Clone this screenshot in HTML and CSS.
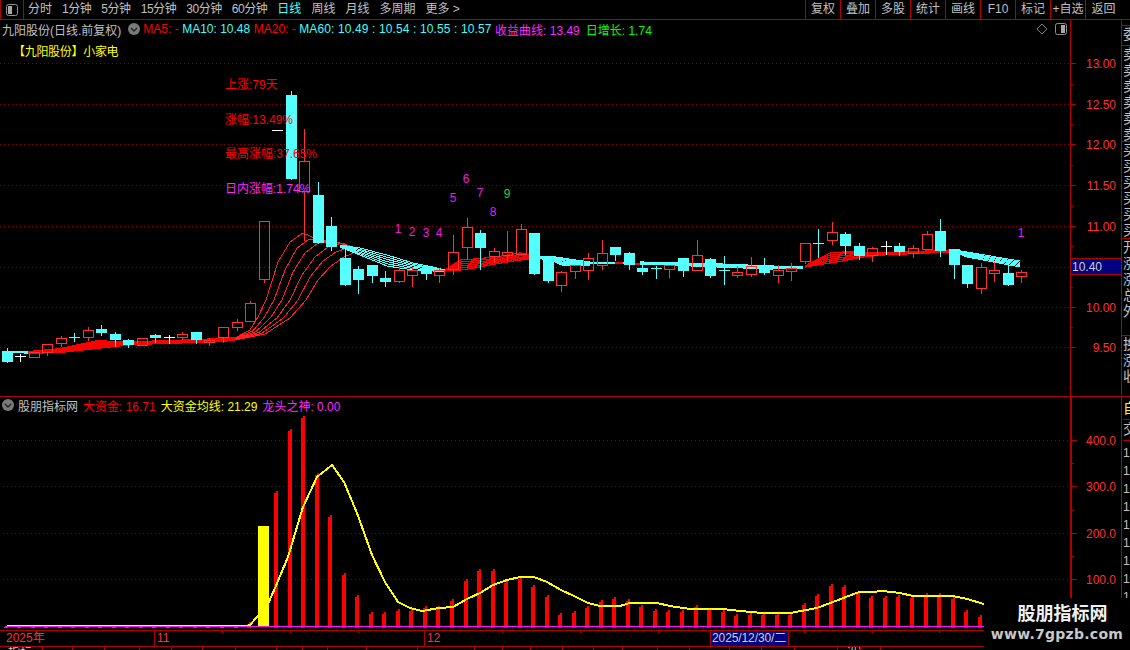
FILE: index.html
```html
<!DOCTYPE html>
<html lang="zh-CN">
<head>
<meta charset="utf-8">
<title>九阳股份 日线</title>
<link rel="stylesheet" href="styles.css">
</head>
<body>
<div class="app">
  <header class="toolbar">
    <div class="tb-icon">
      <svg class="panel-icon" viewBox="0 0 12 12"><rect x="0.5" y="0.5" width="11" height="11" rx="2" class="pi-frame"/><rect x="2" y="2" width="4" height="8" class="pi-fill"/></svg>
    </div>
    <nav class="tb-periods">
      <span>分时</span><span class="num">1分钟</span><span class="num">5分钟</span><span class="num">15分钟</span><span class="num">30分钟</span><span class="num">60分钟</span>
      <span class="active">日线</span><span>周线</span><span>月线</span><span>多周期</span><span>更多 &gt;</span>
    </nav>
    <nav class="tb-tools">
      <span>复权</span><span>叠加</span><span>多股</span><span>统计</span><span>画线</span><span>F10</span><span>标记</span><span>+自选</span><span class="last">返回</span>
    </nav>
  </header>

  <main class="workspace">
    <section class="pane pane-price" id="pricePane">
      <div class="legend">
        <span class="name">九阳股份(日线.前复权)</span>
        <svg class="circle-icon" viewBox="0 0 12 12"><circle cx="6" cy="6" r="6" class="ci-disc"/><path d="M3 5l3 3 3-3" class="ci-mark"/></svg>
        <span class="red">MA5: -</span>
        <span class="cyan">MA10: 10.48</span>
        <span class="red">MA20: -</span>
        <span class="cyan ma60">MA60: 10.49 : 10.54 : 10.55 : 10.57</span>
        <span class="magenta">收益曲线: 13.49</span>
        <span class="green daily">日增长: 1.74</span>
        <span class="legend-tools">
          <svg class="diamond" viewBox="0 0 12 12"><path d="M6 1l5 5-5 5-5-5z"/></svg>
          <svg class="panel-icon" viewBox="0 0 12 12"><rect x="0.5" y="0.5" width="11" height="11" rx="2" class="pi-frame"/><rect x="6" y="2" width="4" height="8" class="pi-fill"/></svg>
        </span>
      </div>
      <div class="sector">【九阳股份】小家电</div>
    </section>
    <div class="axis axis-price" id="priceAxis"></div>
    <aside class="side">
      <div class="side-cell h6"></div>
      <div class="side-cell h20"><span class="side-text">委</span></div>
      <div class="side-cell h96"><span class="side-text">卖卖卖卖卖卖</span></div>
      <div class="side-cell h97"><span class="side-text">买买买买买买</span></div>
      <div class="side-cell h97"><span class="side-text">开涨涨总外</span></div>
      <div class="side-cell h60"><span class="side-text">换涨收</span></div>
    </aside>

    <section class="pane pane-ind" id="indPane">
      <div class="legend legend-ind">
        <svg class="circle-icon" viewBox="0 0 12 12"><circle cx="6" cy="6" r="6" class="ci-disc"/><path d="M3 5l3 3 3-3" class="ci-mark"/></svg>
        <span class="name">股朋指标网</span>
        <span class="red">大资金: 16.71</span>
        <span class="yellow">大资金均线: 21.29</span>
        <span class="magenta">龙头之神: 0.00</span>
      </div>
    </section>
    <div class="axis axis-ind" id="indAxis"></div>
    <aside class="side side-ind">
      <div class="side-own">自</div>
      <div class="side-trade">交</div>
      <div class="side-nums">
        <span>10.40</span><span>10.41</span><span>10.42</span><span>10.43</span><span>10.44</span><span>10.45</span><span>10.46</span><span>10.47</span><span>10.48</span>
      </div>
    </aside>

    <div class="timeaxis" id="timeAxis">
      <span class="t t-year">2025年</span>
      <span class="t t-nov">11</span>
      <span class="t t-dec">12</span>
      <span class="t-date">2025/12/30/二</span>
    </div>
  </main>

  <footer class="tabs" id="tabs"></footer>

  <div class="watermark">
    <div class="wm-title">股朋指标网</div>
    <div class="wm-url">www.7gpzb.com</div>
  </div>
</div>
<script src="chart.js"></script>
</body>
</html>
```

FILE: styles.css
```css
* { box-sizing: border-box; }
html, body { margin: 0; padding: 0; background: #000; }
body {
  font-family: "Liberation Sans", "Noto Sans CJK SC", sans-serif;
  font-size: 12px;
  color: #c0c0c0;
}
.app {
  position: relative;
  width: 1130px;
  height: 650px;
  display: flex;
  flex-direction: column;
  overflow: hidden;
  background: #000;
}

/* top toolbar */
.toolbar {
  flex: 0 0 20px;
  display: flex;
  border-bottom: 1px solid #b00000;
  line-height: 19px;
}
.tb-icon {
  width: 24px;
  display: flex;
  align-items: center;
  justify-content: center;
  border-left: 1px solid #b00000;
  border-right: 1px solid #b00000;
}
.panel-icon { width: 12px; height: 12px; display: block; }
.pi-frame { fill: none; stroke: #909090; }
.pi-fill { fill: #a8a8a8; }
.tb-periods { display: flex; gap: 10px; padding-left: 4px; }
.tb-periods .num { letter-spacing: -0.45px; }
.tb-periods .active { color: #4fffff; }
.tb-tools { display: flex; margin-left: auto; padding-right: 9px; }
.tb-tools span {
  width: 35px;
  text-align: center;
  border-left: 1px solid #b00000;
}
.tb-tools .last { width: 36px; }

/* workspace grid */
.workspace {
  flex: 0 0 627px;
  display: grid;
  grid-template-columns: 1070px 51px 9px;
  grid-template-rows: 377px 233px 17px;
}
.pane { position: relative; }
.pane-price { border-bottom: 1px solid #b00000; }
.plot { position: absolute; left: 0; top: 0; display: block; }
.legend {
  position: relative;
  height: 20px;
  display: flex;
  align-items: center;
  gap: 3.5px;
  padding: 0 3px 2px 2px;
  white-space: nowrap;
}
.legend-ind { height: 18px; gap: 5px; padding-bottom: 2px; }
.legend-ind .circle-icon { margin: 0 -1px 0 0; }
.ma60 { letter-spacing: 0.12px; }
.daily { margin-left: 2.5px; }
.name { color: #c0c0c0; }
.red { color: #ff0000; }
.cyan { color: #3fffff; }
.magenta { color: #ff28ff; }
.green { color: #00ff00; }
.yellow { color: #ffff00; }
.circle-icon { width: 12px; height: 12px; flex: none; margin: 0 0 0 3px; }
.ci-disc { fill: #7a7a7a; }
.ci-mark { fill: none; stroke: #222; stroke-width: 1.4; }
.legend-tools {
  margin-left: auto;
  display: flex;
  align-items: center;
  gap: 7px;
}
.diamond { width: 12px; height: 12px; }
.diamond path { fill: none; stroke: #808080; }
.sector {
  position: relative;
  padding: 4px 0 0 13px;
  color: #ffff00;
  line-height: 16px;
  letter-spacing: -0.3px;
}

/* axes */
.axis { position: relative; }
.axis-price { border-bottom: 1px solid #b00000; }
.axis-text { font-size: 12px; fill: #ff3232; }
.price-flag { font-size: 12px; fill: #d0d0d0; }

/* right strip */
.side {
  border-left: 1px solid #b00000;
  overflow: hidden;
}
.side-cell { border-bottom: 1px solid #b00000; overflow: hidden; padding-left: 1px; }
.h6 { height: 6px; }
.h20 { height: 20px; }
.h96 { height: 96px; }
.h97 { height: 97px; }
.h60 { height: 61px; }
.side-text {
  display: block;
  width: 14px;
  font-size: 14px;
  line-height: 16px;
  color: #c0c0c0;
  word-break: break-all;
}
.side-ind { padding: 3px 0 0 1px; }
.side-own {
  font-size: 14px;
  line-height: 17px;
  width: 20px;
  color: #ffff00;
  border-bottom: 1px solid #b00000;
  padding-bottom: 2px;
}
.side-trade {
  font-size: 14px;
  line-height: 17px;
  width: 20px;
  margin-top: 1px;
  color: #c0c0c0;
  border-bottom: 1px solid #b00000;
  padding-bottom: 2px;
}
.side-nums { display: flex; flex-direction: column; padding-top: 3px; width: 40px; line-height: 18px; }

/* time axis */
.timeaxis {
  grid-column: 1 / -1;
  position: relative;
  display: flex;
  align-items: center;
  border-top: 1px solid #b00000;
  border-bottom: 1px solid #b00000;
  color: #ff3232;
}
.t { height: 100%; padding-left: 2px; line-height: 15px; }
.t-year { width: 154px; padding-left: 6px; }
.t-nov { width: 270px; border-left: 1px solid #b00000; }
.t-dec { width: 286px; border-left: 1px solid #b00000; }
.t-date {
  width: 79px;
  height: 100%;
  background: #000080;
  color: #d0d0d0;
  border-left: 1px solid #b00000;
  border-right: 1px solid #b00000;
  line-height: 15px;
  white-space: nowrap;
  letter-spacing: -0.1px;
  padding-left: 1px;
}
.time-ticks { position: absolute; left: 0; top: 0; display: block; }

/* bottom tabs */
.tabs { flex: 1; display: flex; overflow: hidden; }
.tab {
  flex: none;
  height: 12px;
  padding-left: 8px;
  border-right: 1px solid #b00000;
  line-height: 13px;
  white-space: nowrap;
  color: #d0d0d0;
  overflow: hidden;
}
.tab-cyan { color: #4fffff; }

/* watermark stamped over the corner */
.watermark {
  position: absolute;
  left: 984px;
  top: 598px;
  right: 0;
  bottom: 0;
  background: #000;
  text-align: center;
  padding: 1px 0 0 8px;
}
.wm-title {
  font-size: 18px;
  font-weight: 700;
  line-height: 30px;
  color: #f0f0f0;
  padding-left: 3px;
}
.wm-url {
  font-family: "DejaVu Sans", sans-serif;
  font-size: 14px;
  font-weight: 700;
  line-height: 12px;
  letter-spacing: 0.25px;
  color: #c8c8c8;
  white-space: nowrap;
  margin-left: -8px;
  margin-top: -1px;
}
```

FILE: chart.js
```js
(function () {
  var NS = 'http://www.w3.org/2000/svg';
  var RED = '#ff3232', CY = '#54ffff', GRID = '#8a0000', AX = '#b00000';

  function svg(parent, cls, x, y, w, h, body) {
    var s = document.createElementNS(NS, 'svg');
    s.setAttribute('class', cls);
    s.setAttribute('width', w);
    s.setAttribute('height', h);
    s.setAttribute('viewBox', x + ' ' + y + ' ' + w + ' ' + h);
    s.innerHTML = body;
    parent.insertBefore(s, parent.firstChild);
  }
  function rect(x, y, w, h, c) {
    return '<rect x="' + x + '" y="' + y + '" width="' + w + '" height="' + h + '" fill="' + c + '" shape-rendering="crispEdges"/>';
  }
  function line(x1, y1, x2, y2, c) {
    return '<line x1="' + x1 + '" y1="' + y1 + '" x2="' + x2 + '" y2="' + y2 + '" stroke="' + c + '" shape-rendering="crispEdges"/>';
  }
  function poly(pts, c, w) {
    return '<polyline fill="none" stroke="' + c + '" stroke-width="' + w + '" shape-rendering="crispEdges" points="' +
      pts.map(function (p) { return p[0] + ',' + p[1]; }).join(' ') + '"/>';
  }
  function grid(y, x0) {
    return '<line x1="' + x0 + '" y1="' + (y + 0.5) + '" x2="1070" y2="' + (y + 0.5) + '" stroke="' + GRID + '" stroke-dasharray="1 3" shape-rendering="crispEdges"/>';
  }
  function cx(i) { return Math.round(6.5 + 13.53 * i); }

  /* kind, bodyTop, bodyBottom, wickTop, wickBottom */
  var K = [
    ['c',351,362,348,362],['w',356,356,354,361],['r',352,357,352,357],['r',344,352,344,355],
    ['r',338,343,336,346],['x',337,337,333,341],['r',330,337,327,340],['c',329,333,325,335],
    ['c',334,340,332,346],['c',340,345,339,347],['r',338,345,338,345],['c',335,338,334,342],
    ['w',337,337,335,343],['r',334,337,332,339],['c',332,340,332,343],['r',340,342,338,345],
    ['r',327,337,327,342],['r',322,327,319,330],['r',303,321,301,321],['r',221,279,221,282],
    ['d',130,130,130,130],['c',95,179,91,179],['r',161,191,129,240],['c',195,243,182,243],
    ['c',226,247,217,250],['c',258,285,248,285],['c',269,280,266,293],['c',265,276,265,282],
    ['c',278,282,271,286],['r',270,281,265,282],['r',270,275,267,286],['c',270,274,265,279],
    ['r',270,275,268,282],['r',252,269,235,274],['r',227,247,218,259],['c',233,248,230,269],
    ['r',251,256,248,262],['r',252,255,231,260],['r',229,254,224,254],['c',233,274,233,274],
    ['c',256,281,256,282],['r',272,285,271,291],['r',265,271,265,278],['r',258,270,253,279],
    ['r',253,265,240,269],['c',247,255,247,260],['c',253,265,252,269],['c',268,272,265,274],
    ['x',268,268,266,278],['r',265,269,265,277],['c',258,271,258,276],['r',255,270,240,270],
    ['c',259,276,258,277],['x',270,270,256,284],['r',272,275,266,277],['r',266,274,257,276],
    ['c',266,273,258,274],['r',270,275,265,282],['r',268,271,263,280],['r',243,261,243,263],
    ['x',243,243,229,257],['r',232,240,222,244],['c',234,246,232,254],['c',246,256,243,259],
    ['r',248,255,247,261],['w',246,246,241,254],['c',246,252,243,255],['r',248,253,245,257],
    ['r',234,249,231,249],['c',231,251,219,256],['c',249,265,249,278],['c',265,284,265,287],
    ['r',267,288,263,293],['r',270,273,262,281],['c',273,285,265,285],['r',272,276,270,282]
  ];

  /* moving-average fans: [x, upper y, lower y] */
  function fan(pts, c, w) {
    var out = '';
    for (var k = 0; k < 6; k++) {
      var t = k / 5;
      out += poly(pts.map(function (p) {
        return [p[0], +(p[1] + (p[2] - p[1]) * t).toFixed(1)];
      }), c, w);
    }
    return out;
  }
  function ma() {
    var o = '';
    o += fan([[13,352,352],[28,352,353]], CY, 1.5);
    o += fan([[28,352,353],[60,349,352],[98,341,348],[115,342,346],[135,342,344],[170,341,343],[220,339,341],[235,338,340]], '#ff0000', 2);
    var tops = [
      [[278,262],[290,242],[303,233],[317,239],[331,245]],
      [[285,270],[297,248],[308,240],[320,239],[335,244]],
      [[293,272],[305,253],[318,243],[332,240],[345,245]],
      [[302,275],[315,257],[328,247],[342,243],[350,246]],
      [[310,277],[323,261],[336,252],[350,247]],
      [[318,280],[331,266],[344,257],[358,251]]
    ];
    tops.forEach(function (tp, k) {
      var low = [[235, 338 + 0.4 * k], [250 + 3 * k, 330 + 0.8 * k], [258 + 6.4 * k, 317 + 0.2 * k], [266 + 8 * k, 300]];
      o += poly(low.concat(tp), '#ff2020', 1);
    });
    o += fan([[340,245,247],[360,248,255],[387,255,266],[413,263,270],[433,267,271],[445,270,271]], CY, 1);
    o += fan([[445,270,271],[460,260,270],[475,259,268],[495,257,264],[520,253,260],[538,256,258]], '#ff0000', 1.2);
    o += fan([[538,256,258],[555,257,262],[562,258,265],[575,260,265],[590,262,265]], CY, 1.2);
    o += fan([[590,262,263],[615,262,263]], CY, 1);
    o += fan([[615,262,263],[623,262,263]], '#ff0000', 1);
    o += fan([[623,262,263],[635,262,263]], CY, 1);
    o += fan([[635,263,264],[640,263,264]], '#ff0000', 1);
    o += fan([[640,262,264],[720,264,267],[770,266,269],[803,267,268]], CY, 1.2);
    o += fan([[805,266,267],[830,253,263],[843,252,261],[863,252,257],[883,253,255],[950,250,252]], '#ff0000', 1.2);
    o += fan([[955,250,252],[967,252,257],[1020,261,267]], CY, 1);
    return o;
  }

  function candles() {
    var o = '';
    K.forEach(function (k, i) {
      var X = cx(i), t = k[0];
      if (t === 'd') { o += rect(X - 5, k[1], 11, 1, '#fff'); return; }
      var col = t === 'c' || t === 'x' ? CY : t === 'w' ? '#fff' : RED;
      if (t === 'x' || t === 'w') {
        o += rect(X, k[3], 1, k[4] - k[3] + 1, col);
        o += rect(X - 5, k[1], 11, 1, col);
      } else if (t === 'c') {
        o += rect(X, k[3], 1, k[4] - k[3] + 1, col);
        o += rect(X - 5, k[1], 11, k[2] - k[1], col);
      } else {
        var h = k[2] - k[1];
        o += rect(X, k[3], 1, k[1] - k[3], col);
        o += rect(X, k[2], 1, k[4] - k[2] + 1, col);
        o += rect(X - 5, k[1], 11, 1, col) + rect(X - 5, k[2], 11, 1, col);
        o += rect(X - 5, k[1], 1, h + 1, col) + rect(X + 5, k[1], 1, h + 1, col);
      }
    });
    return o;
  }

  function label(x, y, s, c, anchor) {
    return '<text x="' + x + '" y="' + y + '" fill="' + c + '" font-size="12"' + (anchor ? ' text-anchor="' + anchor + '"' : '') + '>' + s + '</text>';
  }

  /* price pane */
  var p = '';
  [63, 104, 144, 185, 226, 267, 307, 347].forEach(function (y) { p += grid(y, 0); });
  p += ma();
  p += candles();
  p += label(225, 89, '上涨:79天', '#ff0000');
  p += label(225, 124, '涨幅:13.49%', '#ff0000');
  p += label(225, 158, '最高涨幅:37.65%', '#ff0000');
  p += label(225, 193, '日内涨幅:1.74%', '#ff28ff');
  [[398,233,'1'],[412,236,'2'],[426,237,'3'],[439,237,'4'],[453,202,'5'],[466,183,'6'],[480,197,'7'],[493,216,'8'],[1021,237,'1']].forEach(function (n) {
    p += label(n[0], n[1], n[2], '#e81ee8', 'middle');
  });
  p += label(507, 198, '9', '#30d030', 'middle');
  svg(document.getElementById('pricePane'), 'plot', 0, 20, 1070, 376, p);

  /* indicator pane */
  var tops = {18:622,20:491,21:429,22:416,23:473,24:515,25:573,26:595,27:612,28:612,29:609,30:609,31:606,32:606,33:599,34:579,35:569,36:569,37:581,38:577,39:585,40:595,41:613,42:611,43:606,44:600,45:597,46:599,47:605,48:609,49:610,50:610,51:605,52:608,53:610,54:614,55:613,56:613,57:613,58:613,59:603,60:594,61:584,62:585,63:592,64:596,65:596,66:595,67:596,68:593,69:593,70:597,71:610,72:615,73:615,74:615,75:615};
  var q = '';
  [440, 486, 533, 579].forEach(function (y) { q += grid(y, 3); });
  for (var i = 0; i < 76; i++) {
    var X = cx(i) - 3;
    if (tops[i]) {
      q += rect(X, tops[i] + 2, 4, 628 - tops[i] - 2, '#ff0000');
      q += rect(X + 2, tops[i], 2, 2, '#ff0000');
    } else if (i !== 19) {
      q += rect(X, 627, 4, 1, '#ff3030');
    }
  }
  q += rect(258, 526, 11, 101, '#ffff00');
  q += rect(5, 626, 980, 1, '#ff10ff');
  q += rect(7, 625, 241, 1, '#ffff60');
  q += poly([[248,625],[250,625],[268,604],[275,588],[288,557],[303,507],[317,477],[332,465],[344,482],[357,513],[372,555],[385,582],[398,602],[410,608],[422,611],[439,608],[453,607],[467,599],[480,593],[493,585],[507,580],[520,577],[534,577],[547,582],[561,590],[574,596],[588,603],[600,606],[620,606],[630,603],[657,603],[670,606],[690,609],[723,609],[740,611],[763,613],[790,613],[817,608],[833,602],[859,592],[872,592],[883,591],[900,593],[913,596],[953,596],[967,599],[984,604]], '#ffff00', 2);
  svg(document.getElementById('indPane'), 'plot', 0, 397, 1070, 233, q);

  /* price axis */
  var a = line(1070.5, 20, 1070.5, 396, AX);
  [[63,'13.00'],[104,'12.50'],[144,'12.00'],[185,'11.50'],[226,'11.00'],[307,'10.00'],[347,'9.50']].forEach(function (t) {
    a += rect(1071, t[0], 5, 1, AX);
    a += '<text class="axis-text" x="1116" y="' + (t[0] + 5) + '" text-anchor="end">' + t[1] + '</text>';
  });
  [84, 124, 165, 206, 246, 287, 327].forEach(function (y) { a += rect(1071, y, 2, 1, AX); });
  a += rect(1071, 258, 50, 17, AX) + rect(1071, 259, 50, 15, '#000080');
  a += '<text class="price-flag" x="1072" y="271">10.40</text>';
  svg(document.getElementById('priceAxis'), 'plot', 1070, 20, 51, 376, a);

  /* indicator axis */
  var b = rect(1070, 397, 2, 233, AX);
  [[440,'400.0'],[486,'300.0'],[533,'200.0'],[579,'100.0']].forEach(function (t) {
    b += rect(1072, t[0], 5, 1, AX);
    b += '<text class="axis-text" x="1116" y="' + (t[0] + 5) + '" text-anchor="end">' + t[1] + '</text>';
  });
  [463, 510, 556].forEach(function (y) { b += rect(1072, y, 2, 1, AX); });
  svg(document.getElementById('indAxis'), 'plot', 1070, 397, 51, 233, b);

  /* time axis ticks */
  var tk = '';
  [222, 290, 358, 502, 580, 658, 804, 872, 939].forEach(function (x) { tk += rect(x, 0, 1, 2, AX); });
  svg(document.getElementById('timeAxis'), 'time-ticks', 0, 0, 1000, 3, tk);

  /* bottom tabs */
  var tabs = document.getElementById('tabs');
  [43,30,32,35,32,31,33,41,26,25,39,51,57,28,28,32,31,29,35,32,40,32,33,43,23,20].forEach(function (w, i) {
    var el = document.createElement('span');
    el.className = 'tab' + (i === 24 ? ' tab-cyan' : '');
    el.style.width = w + 'px';
    el.textContent = i === 0 ? '指标' : i === 24 ? '设置' : i === 1 ? '.' : '';
    tabs.appendChild(el);
  });
})();
```
